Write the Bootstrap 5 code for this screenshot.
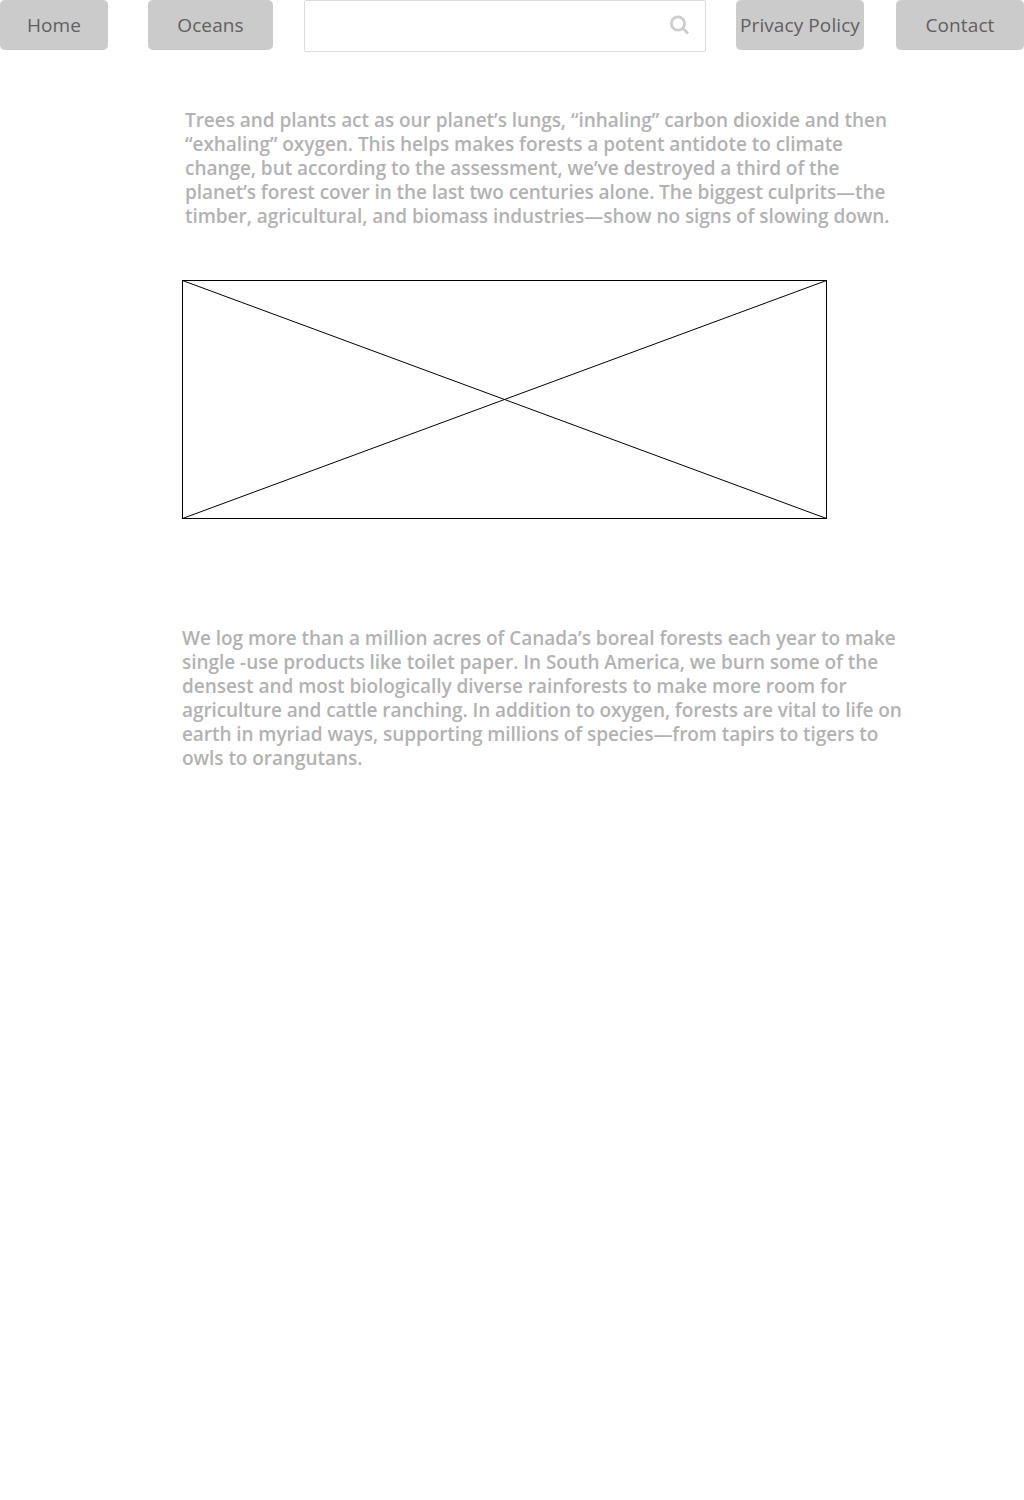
<!DOCTYPE html>
<html lang="en">
<head>
<meta charset="utf-8">
<meta name="viewport" content="width=device-width, initial-scale=1">
<title>Forests</title>
<link href="https://cdn.jsdelivr.net/npm/bootstrap@5.3.0/dist/css/bootstrap.min.css" rel="stylesheet">
<style>
body{font-family:"Open Sans",sans-serif;min-height:1500px;background:#fff}
.site-link{height:50px;background:#cbcbcb;color:#606060;border:0;border-radius:5px;font-size:19px;letter-spacing:.09px;line-height:24px;padding:0;white-space:nowrap}
.w-home{width:108px;margin-right:40px}
.w-oceans{width:125px;margin-right:31px}
.w-privacy{width:128px;margin-right:32px}
.w-contact{width:128px}
.search-box{width:402px;height:52px;margin-right:30px;border:1px solid #ddd;border-radius:2px;padding:0 15px 2px 0}
.search-box input{height:48px;box-shadow:none!important}
.story{font-size:19px;line-height:24px;font-weight:600;letter-spacing:-.038px;color:#b2b2b2;white-space:nowrap}
.snug{letter-spacing:-.074px}
.intro{margin:56px 0 0 185px}
.frame{display:block;margin:52px 0 0 182px}
.detail{margin:107px 0 0 182px}
</style>
</head>
<body>
<nav class="d-flex align-items-start">
<a class="btn site-link w-home d-flex align-items-center justify-content-center" href="#">Home</a>
<a class="btn site-link w-oceans d-flex align-items-center justify-content-center" href="#">Oceans</a>
<form class="search-box d-flex align-items-center">
<input class="form-control border-0 bg-transparent" type="text" aria-label="Search">
<svg class="flex-shrink-0" width="21" height="21" viewBox="0 0 21 21" fill="none" stroke="#ccc" stroke-width="2.8"><circle cx="9" cy="8.5" r="6.6"/><path d="M13.5 13L19 18.5"/></svg>
</form>
<a class="btn site-link w-privacy d-flex align-items-center justify-content-center" href="#">Privacy Policy</a>
<a class="btn site-link w-contact d-flex align-items-center justify-content-center" href="#">Contact</a>
</nav>
<main>
<p class="story intro">Trees and plants act as our planet’s lungs, “inhaling” carbon dioxide and then<br>“exhaling” oxygen. This helps makes forests a potent antidote to climate<br>change, but according to the assessment, we’ve destroyed a third of the<br><span class="snug">planet’s forest cover in the last two centuries alone. The biggest culprits—the</span><br>timber, agricultural, and biomass industries—show no signs of slowing down.</p>
<svg class="frame" width="645" height="239" viewBox="0 0 645 239" fill="none" stroke="#000"><rect x=".5" y=".5" width="644" height="238"/><path d="M.5 .5L644.5 238.5M.5 238.5L644.5 .5"/></svg>
<p class="story detail">We log more than a million acres of Canada’s boreal forests each year to make<br>single -use products like toilet paper. In South America, we burn some of the<br>densest and most biologically diverse rainforests to make more room for<br><span class="snug">agriculture and cattle ranching. In addition to oxygen, forests are vital to life on<br>earth in myriad ways, supporting millions of species—from tapirs to tigers to</span><br>owls to orangutans.</p>
</main>
<script src="https://cdn.jsdelivr.net/npm/bootstrap@5.3.0/dist/js/bootstrap.bundle.min.js"></script>
</body>
</html>
